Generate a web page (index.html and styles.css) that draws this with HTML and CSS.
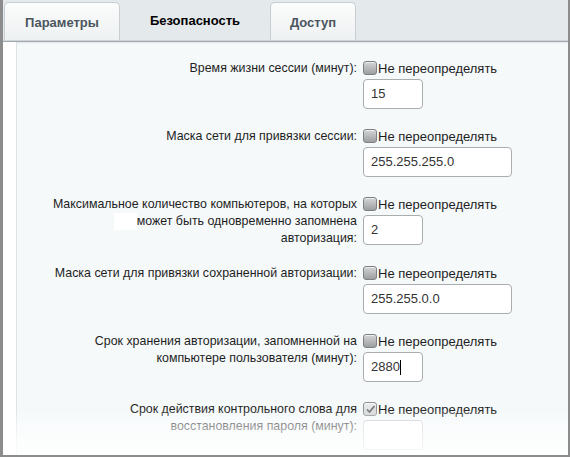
FILE: index.html
```html
<!DOCTYPE html>
<html>
<head>
<meta charset="utf-8">
<link rel="stylesheet" href="styles.css">
</head>
<body>
<div class="frame">
  <div class="tabs">
    <div class="tab">Параметры</div>
    <div class="tab active">Безопасность</div>
    <div class="tab">Доступ</div>
  </div>
  <div class="strip"></div>
  <div class="body">
    <div class="gutter"></div>
    <div class="content">
      <div class="row">
        <div class="label">Время жизни сессии (минут):</div>
        <div class="ctrl">
          <div class="line"><span class="cb"></span><span class="cbt">Не переопределять</span></div>
          <div class="inp short">15</div>
        </div>
      </div>
      <div class="row">
        <div class="label">Маска сети для привязки сессии:</div>
        <div class="ctrl">
          <div class="line"><span class="cb"></span><span class="cbt">Не переопределять</span></div>
          <div class="inp long">255.255.255.0</div>
        </div>
      </div>
      <div class="row">
        <div class="label">Максимальное количество компьютеров, на которых<br><span class="sel"></span>может быть одновременно запомнена<br>авторизация:</div>
        <div class="ctrl">
          <div class="line"><span class="cb"></span><span class="cbt">Не переопределять</span></div>
          <div class="inp short">2</div>
        </div>
      </div>
      <div class="row">
        <div class="label">Маска сети для привязки сохраненной авторизации:</div>
        <div class="ctrl">
          <div class="line"><span class="cb"></span><span class="cbt">Не переопределять</span></div>
          <div class="inp long">255.255.0.0</div>
        </div>
      </div>
      <div class="row">
        <div class="label">Срок хранения авторизации, запомненной на<br>компьютере пользователя (минут):</div>
        <div class="ctrl">
          <div class="line"><span class="cb"></span><span class="cbt">Не переопределять</span></div>
          <div class="inp short">2880<span class="caret"></span></div>
        </div>
      </div>
      <div class="row">
        <div class="label">Срок действия контрольного слова для<br>восстановления пароля (минут):</div>
        <div class="ctrl">
          <div class="line"><span class="cb checked"><svg width="11" height="11" viewBox="0 0 11 11"><path d="M2 5.5 L4.5 8 L9.5 2" fill="none" stroke="#6f7478" stroke-width="1.6"/></svg></span><span class="cbt">Не переопределять</span></div>
          <div class="inp short disabled"></div>
        </div>
      </div>
    </div>
  </div>
  <div class="fade"></div>
</div>
</body>
</html>
```
FILE: styles.css
```css
html, body {
  margin: 0;
  padding: 0;
}
body {
  width: 570px;
  height: 457px;
  overflow: hidden;
  font-family: "Liberation Sans", Arial, sans-serif;
  font-size: 13px;
  color: #1e1e1e;
}
.frame {
  position: relative;
  width: 565px;
  height: 455px;
  border-left: 3px solid #8c8c8c;
  border-right: 2px solid #8c8c8c;
  border-bottom: 2px solid #8c8c8c;
  background: #f5f9fa;
  overflow: hidden;
  display: flex;
  flex-direction: column;
}
.tabs {
  height: 42px;
  background: #e4e9eb;
  display: flex;
  align-items: flex-end;
  padding-left: 1px;
  gap: 9px;
  border-bottom: 1px solid #cfd5d8;
  box-sizing: content-box;
}
.tab {
  height: 38px;
  box-sizing: border-box;
  padding: 0 20px;
  line-height: 40px;
  font-weight: bold;
  font-size: 13px;
  color: #4b5560;
  background: linear-gradient(#fbfcfc, #eef1f2);
  border: 1px solid #c8ced1;
  border-bottom: none;
  border-radius: 5px 5px 0 0;
}
.tab:first-child { width: 116px; text-align: center; padding: 0; }
.tab.active {
  background: transparent;
  border-color: transparent;
  color: #000;
  width: 132px;
  padding: 0;
  text-align: center;
  line-height: 40px;
  height: 40px;
}
.tab:last-child { width: 86px; padding: 0; text-align: center; }
.strip {
  height: 6px;
  background: #eef2f3;
  border-bottom: 1px solid #a2a9ad;
  box-shadow: 0 1px 2px rgba(0,0,0,0.12);
}
.body {
  flex: 1;
  display: flex;
}
.gutter {
  width: 13px;
  background: #ffffff;
  border-right: 1px solid #dce4e7;
  flex: none;
}
.content {
  flex: 1;
  padding-top: 17px;
}
.row {
  display: grid;
  grid-template-columns: 346px 1fr;
  padding-bottom: 18px;
}
.label {
  text-align: right;
  padding-right: 6px;
  line-height: 16.5px;
  padding-top: 1px;
  font-size: 12.4px;
  color: #1e1e1e;
}
.sel {
  display: inline-block;
  width: 23px;
  height: 17px;
  background: #fff;
  vertical-align: top;
}
.line {
  height: 18px;
  display: flex;
  align-items: center;
}
.cb {
  width: 12px;
  height: 12px;
  border: 1px solid #7d8185;
  border-radius: 3px;
  background: linear-gradient(#d4d5d6, #9c9ea0);
  box-shadow: inset 0 1px 0 rgba(255,255,255,0.6);
  flex: none;
  display: flex;
  align-items: center;
  justify-content: center;
}
.cb.checked {
  background: linear-gradient(#eeeeee, #d2d4d6);
  border-color: #8f9397;
}
.cbt {
  margin-left: 1px;
  line-height: 18px;
  position: relative;
  top: 1px;
}
.inp {
  margin-top: 2px;
  height: 30px;
  box-sizing: border-box;
  border: 1px solid #a9adb0;
  border-radius: 4px;
  background: #fff;
  padding-left: 7px;
  line-height: 28px;
  color: #333;
  display: flex;
  align-items: center;
}
.inp.short { width: 60px; }
.inp.long { width: 149px; }
.inp.disabled { border-color: #c8ccce; }
.caret {
  display: inline-block;
  width: 1px;
  height: 15px;
  background: #000;
}
.fade {
  position: absolute;
  left: 0;
  right: 0;
  bottom: 0;
  height: 46px;
  background: linear-gradient(rgba(255,255,255,0), rgba(255,255,255,0.5) 35%, rgba(255,255,255,0.88));
  pointer-events: none;
}
```
